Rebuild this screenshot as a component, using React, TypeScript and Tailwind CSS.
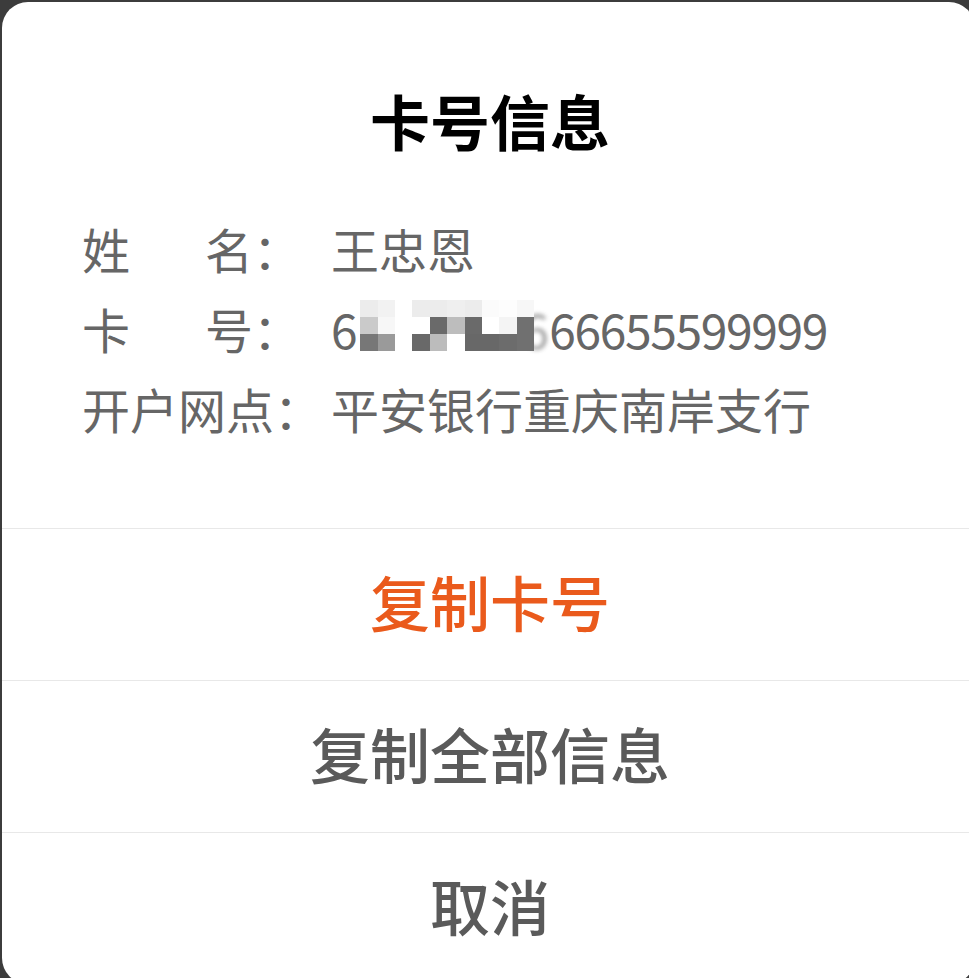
import React from "react";

const cells: string[][] = [
  ["#ececec", "#f2f2f2", "#ffffff", "#ececec", "#ececec", "#efefef", "#ececec", "#fbfbfb", "#fdfdfd", "#f7f7f7"],
  ["#cacaca", "#f7f7f7", "#ffffff", "#ffffff", "#6a6a6a", "#bdbdbd", "#6a6a6a", "#ffffff", "#f4f4f4", "#707070"],
  ["#777777", "#9a9a9a", "#ffffff", "#696969", "#bcbcbc", "#ffffff", "#686868", "#686868", "#6c6c6c", "#707070"],
];

export default function App() {
  const font = { fontFamily: '"Noto Sans CJK SC", "Noto Sans", sans-serif' };
  return (
    <div className="w-[969px] h-[978px] overflow-hidden bg-[#3c3c3c]" style={font}>
      <div className="ml-[2px] mt-[2px] w-[973px] h-[982px] bg-white rounded-[26px] flex flex-col">
        <div className="pt-[78px] pb-[80px]">
          <div className="h-[80px] leading-[80px] text-center text-[60px] font-bold text-black pl-[3px]">卡号信息</div>
          <div className="mt-[48px] pl-[80px] text-[48px] text-[#666666]">
            <div className="flex h-[80px] leading-[80px]">
              <div className="w-[249px] flex">
                <span>姓</span>
                <span className="ml-[75px]">名：</span>
              </div>
              <span>王忠恩</span>
            </div>
            <div className="flex h-[80px] leading-[80px]">
              <div className="w-[249px] flex">
                <span>卡</span>
                <span className="ml-[75px]">号：</span>
              </div>
              <span className="flex tracking-[-1.4px]">
                <span>6</span>
                <span className="relative inline-block w-[193px] h-[80px]">
                  <span className="absolute left-[166px] top-0 text-[#777777] blur-[2px] opacity-70">6</span>
                  <span className="absolute left-[4px] top-[12px] grid grid-cols-[repeat(10,17.4px)] grid-rows-[repeat(3,17px)]">
                    {cells.flatMap((row, r) =>
                      row.map((c, i) => (
                        <span key={`${r}-${i}`} style={{ backgroundColor: c }} className="block w-full h-full" />
                      ))
                    )}
                  </span>
                </span>
                <span>66655599999</span>
              </span>
            </div>
            <div className="flex h-[80px] leading-[80px]">
              <div className="w-[249px]">开户网点：</div>
              <span>平安银行重庆南岸支行</span>
            </div>
          </div>
        </div>
        <div className="border-t border-[#e8e8e8] h-[152px] flex items-center justify-center pb-[7px] text-[60px] font-medium text-[#ea5a1c] pl-[3px]">
          复制卡号
        </div>
        <div className="border-t border-[#e8e8e8] h-[152px] flex items-center justify-center pb-[7px] text-[60px] font-medium text-[#5a5a5a] pl-[3px]">
          复制全部信息
        </div>
        <div className="border-t border-[#e8e8e8] flex-1 flex items-start pt-[40px] justify-center text-[60px] font-medium text-[#5a5a5a] leading-[64px] pl-[3px]">
          取消
        </div>
      </div>
    </div>
  );
}
